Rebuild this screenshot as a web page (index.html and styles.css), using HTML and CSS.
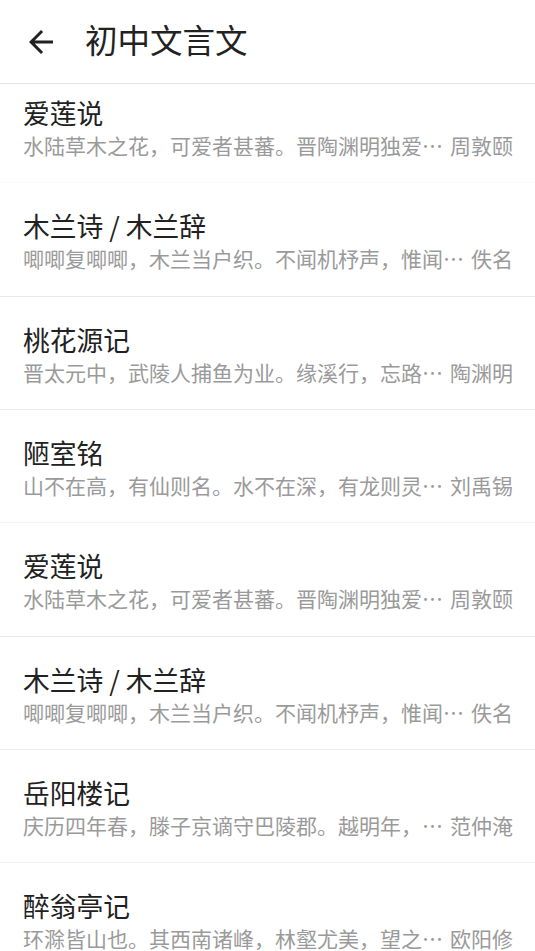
FILE: index.html
```html
<!DOCTYPE html>
<html lang="zh-CN">
<head>
<meta charset="utf-8">
<title>初中文言文</title>
<link rel="stylesheet" href="styles.css">
</head>
<body>
<div class="app">
  <header class="toolbar">
    <button class="back" aria-label="返回">
      <svg viewBox="0 0 24 24" width="36" height="36"><path d="M20 11H7.83l5.59-5.59L12 4l-8 8 8 8 1.41-1.41L7.83 13H20v-2z" fill="#222"/></svg>
    </button>
    <h1 class="title">初中文言文</h1>
  </header>
  <main class="viewport">
    <ul class="list">
      <li class="row row-plain"><div class="name">爱莲说</div><div class="sub"><span class="excerpt">水陆草木之花，可爱者甚蕃。晋陶渊明独爱…</span><span class="author">周敦颐</span></div></li>
      <li class="row"><div class="name">木兰诗 / 木兰辞</div><div class="sub"><span class="excerpt">唧唧复唧唧，木兰当户织。不闻机杼声，惟闻…</span><span class="author">佚名</span></div></li>
      <li class="row"><div class="name">桃花源记</div><div class="sub"><span class="excerpt">晋太元中，武陵人捕鱼为业。缘溪行，忘路…</span><span class="author">陶渊明</span></div></li>
      <li class="row row-faint"><div class="name">陋室铭</div><div class="sub"><span class="excerpt">山不在高，有仙则名。水不在深，有龙则灵…</span><span class="author">刘禹锡</span></div></li>
      <li class="row"><div class="name">爱莲说</div><div class="sub"><span class="excerpt">水陆草木之花，可爱者甚蕃。晋陶渊明独爱…</span><span class="author">周敦颐</span></div></li>
      <li class="row"><div class="name">木兰诗 / 木兰辞</div><div class="sub"><span class="excerpt">唧唧复唧唧，木兰当户织。不闻机杼声，惟闻…</span><span class="author">佚名</span></div></li>
      <li class="row row-faint"><div class="name">岳阳楼记</div><div class="sub"><span class="excerpt">庆历四年春，滕子京谪守巴陵郡。越明年，…</span><span class="author">范仲淹</span></div></li>
      <li class="row"><div class="name">醉翁亭记</div><div class="sub"><span class="excerpt">环滁皆山也。其西南诸峰，林壑尤美，望之…</span><span class="author">欧阳修</span></div></li>
    </ul>
  </main>
</div>
</body>
</html>
```

FILE: styles.css
```css
* { box-sizing: border-box; }
html, body {
  margin: 0;
  padding: 0;
  background: #ffffff;
  font-family: "Noto Sans CJK SC", "Noto Sans", Roboto, sans-serif;
  overflow: hidden;
}
.app {
  width: 535px;
  height: 951px;
  display: flex;
  flex-direction: column;
  overflow: hidden;
}
.toolbar {
  flex: 0 0 auto;
  height: 84px;
  display: flex;
  align-items: center;
  border-bottom: 1px solid #e2e2e2;
  background: #fff;
  position: relative;
  z-index: 1;
}
.back {
  border: 0;
  background: none;
  padding: 0;
  margin: 0 0 0 23px;
  width: 36px;
  height: 36px;
  display: flex;
  align-items: center;
  justify-content: center;
}
.back svg { display: block; }
.title {
  margin: 0 0 4px 26px;
  font-size: 32.5px;
  font-weight: 400;
  color: #222222;
  line-height: 1;
  letter-spacing: 0;
}
.viewport {
  flex: 1 1 auto;
  overflow: hidden;
}
.list {
  list-style: none;
  margin: -14px 0 0 0;
  padding: 0;
}
.row {
  height: 113.33px;
  padding: 25px 23px 0 23px;
  border-bottom: 1px solid #e9e9e9;
  display: flex;
  flex-direction: column;
}
.row-plain { border-bottom-color: #fbfbfb; }
.row-faint { border-bottom-color: #f3f3f3; }
.name {
  font-size: 26.75px;
  line-height: 35px;
  color: #212121;
  white-space: nowrap;
}
.sub {
  margin-top: 3px;
  display: flex;
  font-size: 21px;
  font-weight: 400;
  line-height: 25px;
  color: #9a9a9a;
  white-space: nowrap;
}
.excerpt { flex: 0 0 auto; }
.author { flex: 0 0 auto; margin-left: 7px; }
```
